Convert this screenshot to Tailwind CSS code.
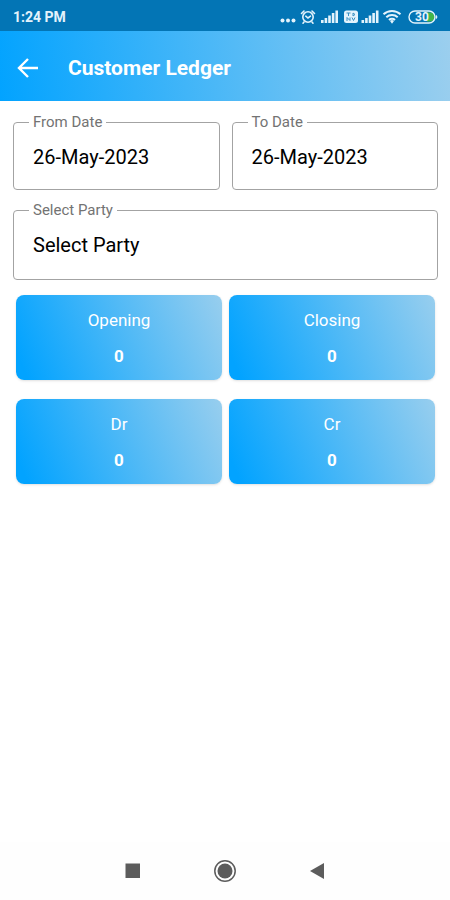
<!DOCTYPE html>
<html lang="en">
<head>
<meta charset="utf-8">
<meta name="viewport" content="width=device-width, initial-scale=1">
<title>Customer Ledger</title>
<script src="https://cdn.jsdelivr.net/npm/@tailwindcss/browser@4"></script>
</head>
<body class="flex min-h-screen flex-col bg-white font-['Roboto',sans-serif] text-black">
  <div class="flex h-[31px] items-center justify-between bg-[#0375b5] pt-[3px] pr-3 pl-[13px] text-[#e3f3fc]">
    <span class="text-sm leading-4 font-bold">1:24 PM</span>
    <svg class="h-4 w-[160px]" viewBox="0 0 160 16" fill="none" aria-label="Alarm, signal, Wi-Fi, battery 30%" role="img">
      <g fill="currentColor">
        <circle cx="4.500" cy="11.500" r="2"/><circle cx="10" cy="11.500" r="2"/><circle cx="15.500" cy="11.500" r="2"/>
        <rect x="43" y="11" width="2.600" height="3"/><rect x="46.600" y="9" width="2.600" height="5"/><rect x="50.200" y="6.500" width="2.600" height="7.500"/><rect x="53.800" y="4" width="2.600" height="10"/><rect x="57.400" y="1.500" width="2.600" height="12.500"/>
        <rect x="83.500" y="11" width="2.600" height="3"/><rect x="87.100" y="9" width="2.600" height="5"/><rect x="90.700" y="6.500" width="2.600" height="7.500"/><rect x="94.300" y="4" width="2.600" height="10"/><rect x="97.900" y="1.500" width="2.600" height="12.500"/>
        <rect x="66" y="1.500" width="14" height="12.500" rx="2.500"/>
      </g>
      <g stroke="currentColor" stroke-width="1.600" stroke-linecap="round">
        <circle cx="30" cy="8" r="5.200"/><path d="M23.500 4.500 26 2M36.500 4.500 34 2M27.800 7.200 30 9 32.500 7.200M26 13l-1 1.200M34 13l1 1.200"/>
      </g>
      <path d="M68.500 4h4M70.500 4v3M75 7V4l2 1.500L75 7M69 12V8.500l3 3V8.500M74 8.500l1.500 3 1.500-3" stroke="#3b91c2" stroke-width="1"/>
      <g stroke="currentColor" stroke-width="2">
        <path d="M105.500 5.300a12.500 12.500 0 0 1 17 0M108.300 8.200a8.400 8.400 0 0 1 11.400 0M111 11a4.400 4.400 0 0 1 6 0"/>
      </g>
      <path d="M112 12a3 3 0 0 1 4 0l-2 2.700z" fill="currentColor"/>
      <path d="M149 3.500h3a4.500 4.500 0 0 1 0 9h-3z" fill="#43b649"/>
      <rect x="131" y="2" width="26" height="12" rx="6" stroke="currentColor" stroke-width="1.400"/>
      <path d="M158 6.500q1.500 1.500 0 3" stroke="currentColor" stroke-width="1.200"/>
      <text x="144" y="12" text-anchor="middle" fill="currentColor" font-family="Roboto, sans-serif" font-size="12" font-weight="700">30</text>
    </svg>
  </div>

  <header class="flex h-[70px] items-center bg-[linear-gradient(81deg,#02a3ff,#9ccfee)] pt-[3px] pl-4 text-white">
    <button type="button" aria-label="Back" class="flex size-6 items-center justify-center">
      <svg class="size-6" viewBox="0 0 24 24" fill="none" stroke="currentColor" stroke-width="2.400"><path d="M22 12H4M12 3 3 12l9 9"/></svg>
    </button>
    <h1 class="pl-7 text-[21px] leading-7 font-bold">Customer Ledger</h1>
  </header>

  <main class="flex flex-1 flex-col">
    <form class="grid grid-cols-2 gap-x-3 gap-y-[13px] px-3 pt-[14px] pl-[13px]">
      <fieldset class="h-[75px] min-w-0 rounded border border-[#a3a3a3] px-[15px]">
        <legend class="px-1 text-[15px] leading-[15px] text-[#737373]"><label for="from">From Date</label></legend>
        <input id="from" type="text" value="26-May-2023" class="mt-[7px] h-10 w-full px-1 text-xl outline-none">
      </fieldset>
      <fieldset class="h-[75px] min-w-0 rounded border border-[#a3a3a3] px-[15px]">
        <legend class="px-1 text-[15px] leading-[15px] text-[#737373]"><label for="to">To Date</label></legend>
        <input id="to" type="text" value="26-May-2023" class="mt-[7px] h-10 w-full px-1 text-xl outline-none">
      </fieldset>
      <fieldset class="col-span-2 h-[77px] min-w-0 rounded border border-[#a3a3a3] px-[15px]">
        <legend class="px-1 text-[15px] leading-[15px] text-[#737373]"><label for="party">Select Party</label></legend>
        <select id="party" class="mt-[7px] h-10 w-full appearance-none px-1 text-xl outline-none"><option>Select Party</option></select>
      </fieldset>
    </form>

    <dl class="grid grid-cols-2 gap-x-[7px] gap-y-[19px] px-4 pt-[15px] pr-[15px] text-center text-[17px] text-white">
      <div class="flex h-[85px] flex-col items-center gap-3 rounded-lg bg-[linear-gradient(67deg,#02a3ff_5%,#98ceee)] pt-[13px] shadow-sm"><dt class="leading-6">Opening</dt><dd class="leading-6 font-bold">0</dd></div>
      <div class="flex h-[85px] flex-col items-center gap-3 rounded-lg bg-[linear-gradient(67deg,#02a3ff_5%,#98ceee)] pt-[13px] shadow-sm"><dt class="leading-6">Closing</dt><dd class="leading-6 font-bold">0</dd></div>
      <div class="flex h-[85px] flex-col items-center gap-3 rounded-lg bg-[linear-gradient(67deg,#02a3ff_5%,#98ceee)] pt-[13px] shadow-sm"><dt class="leading-6">Dr</dt><dd class="leading-6 font-bold">0</dd></div>
      <div class="flex h-[85px] flex-col items-center gap-3 rounded-lg bg-[linear-gradient(67deg,#02a3ff_5%,#98ceee)] pt-[13px] shadow-sm"><dt class="leading-6">Cr</dt><dd class="leading-6 font-bold">0</dd></div>
    </dl>
  </main>

  <nav aria-label="System" class="flex h-[58px] items-center justify-center gap-[68px] bg-[#fefefe] text-[#5c5c5c]">
    <button type="button" aria-label="Recent apps" class="size-6"><svg class="size-6" viewBox="0 0 24 24"><rect x="4.500" y="4.500" width="14.500" height="14.500" fill="currentColor"/></svg></button>
    <button type="button" aria-label="Home" class="size-6"><svg class="size-6" viewBox="0 0 24 24"><circle cx="12" cy="12" r="10.200" fill="none" stroke="currentColor" stroke-width="1.500"/><circle cx="12" cy="12" r="7.500" fill="currentColor"/></svg></button>
    <button type="button" aria-label="Back" class="size-6"><svg class="size-6" viewBox="0 0 24 24"><path d="M19 4v16L5 12z" fill="currentColor"/></svg></button>
  </nav>
</body>
</html>
